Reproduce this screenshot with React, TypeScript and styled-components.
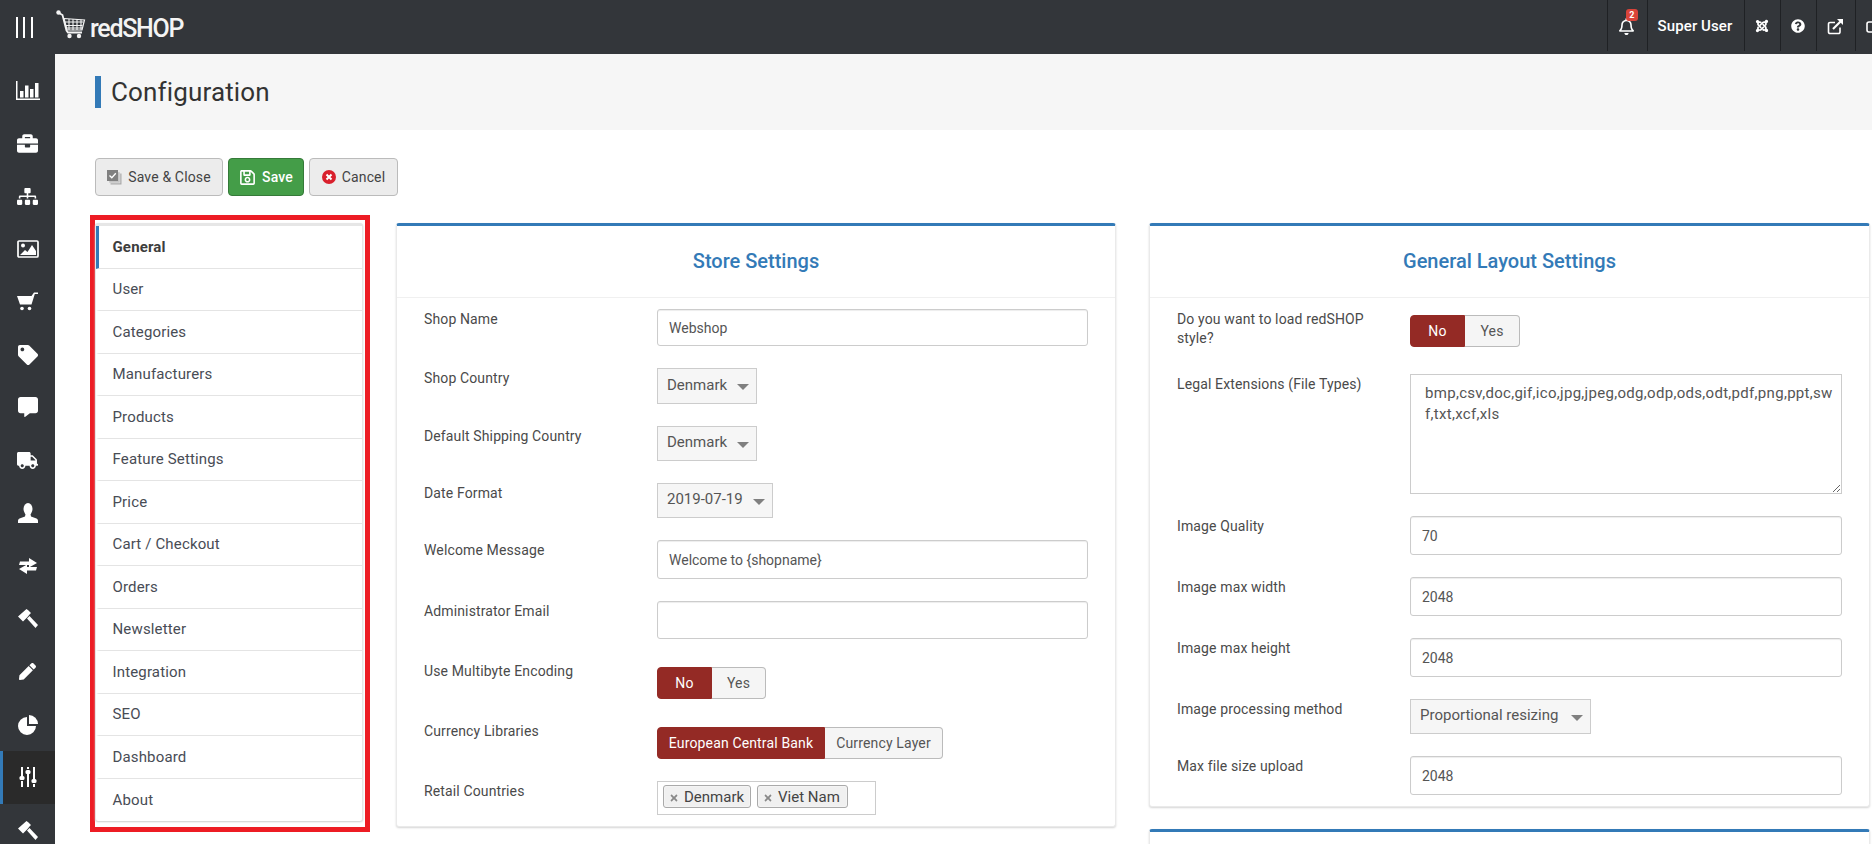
import React from "react";
import styled, { createGlobalStyle } from "styled-components";
import {
  FaBriefcase, FaSitemap, FaTag, FaCommentAlt, FaTruck,
  FaPen, FaRegBell, FaJoomla, FaQuestionCircle, FaRegSave, FaTimes,
} from "react-icons/fa";

const Global = createGlobalStyle`
  html, body { margin: 0; padding: 0; height: 844px; overflow: hidden; background: #fff; }
  * { box-sizing: border-box; }
  body { font-family: Roboto, "Liberation Sans", sans-serif; font-size: 14px; color: #444; }
`;

const Shell = styled.div`width: 1872px; height: 844px; overflow: hidden; display: flex; flex-direction: column;`;
const TopBar = styled.header`height: 54px; flex: none; background: #33363a; display: flex; align-items: flex-start; color: #fff;`;
const Burger = styled.div`width: 48px; height: 54px; display: flex; justify-content: center; gap: 5.5px; padding: 17px 0 16px; margin-right: 8px;
  span { width: 2px; background: #fff; display: block; }`;
const Brand = styled.div`display: flex; align-items: flex-end; height: 30px; margin-top: 9px;`;
const BrandName = styled.span`font-family: Roboto, sans-serif; font-size: 25px; font-weight: 500; line-height: 28px; letter-spacing: -1.3px; color: #f4f4f4; margin-left: 4px; margin-bottom: -4px;`;
const TopRight = styled.div`margin-left: auto; display: flex; height: 51px; width: 265px; flex: none; overflow: hidden;`;
const TopItem = styled.div<{ $w: number }>`width: ${(p) => p.$w}px; flex: none; height: 51px; border-left: 1px solid #1f2124; display: flex; align-items: center; justify-content: center; position: relative; color: #fff; font-size: 15px; font-weight: 500; letter-spacing: .1px; padding: 1px 2px 0 0;`;
const TopEdge = styled(TopItem)`justify-content: flex-start; padding-left: 10px; overflow: hidden; svg { flex: none; }`;
const Badge = styled.span`position: absolute; top: 9px; left: 18px; width: 12px; height: 12px; background: #d9443a; border-radius: 3px; color: #fff; font-size: 9px; font-weight: 700; line-height: 12px; text-align: center;`;
const Body = styled.div`flex: 1; display: flex; min-height: 0;`;
const Side = styled.nav`width: 55px; flex: none; background: #33363a; padding-top: 10px; display: flex; flex-direction: column; overflow: hidden;`;
const SideItem = styled.div<{ $active?: boolean }>`height: 52.85px; flex: none; display: flex; align-items: center; justify-content: center; color: #fff; font-size: 20px;
  background: ${(p) => (p.$active ? "#2a2a2a" : "transparent")};
  border-left: 3px solid ${(p) => (p.$active ? "#337ab7" : "transparent")};
  padding-right: 3px;`;
const Main = styled.main`flex: 1; min-width: 0; display: flex; flex-direction: column;`;
const PageHead = styled.div`height: 76px; flex: none; background: #f6f6f6; padding: 22px 0 0 40px;`;
const Title = styled.h1`margin: 0; height: 32px; border-left: 6px solid #337ab7; padding-left: 10px; font-size: 26px; letter-spacing: .15px; font-weight: 400; line-height: 32px; color: #333;`;
const Content = styled.div`padding: 28px 0 0 40px; flex: 1; min-height: 0;`;
const Toolbar = styled.div`display: flex; gap: 5px; height: 38px; margin-bottom: 19px;`;
const Btn = styled.button<{ $green?: boolean; $w: number }>`width: ${(p) => p.$w}px; height: 38px; padding: 0; display: flex; align-items: center; justify-content: center; gap: 6px;
  font-family: inherit; font-size: 14px; letter-spacing: .15px; font-weight: ${(p) => (p.$green ? 500 : 400)};
  color: ${(p) => (p.$green ? "#fff" : "#444")};
  background: ${(p) => (p.$green ? "#449d48" : "#ececec")};
  border: 1px solid ${(p) => (p.$green ? "#357a39" : "#bbb")}; border-radius: 4px;`;
const Columns = styled.div`display: grid; grid-template-columns: 280px 720px 728px; column-gap: 26px; margin-left: -5px; align-items: start;
  & > :last-child { margin-left: 7px; }`;
const Frame = styled.div`border: 5px solid #ed1c24; height: 617px; padding: 3px 2px 0 0;`;
const Menu = styled.ul`list-style: none; margin: 0; padding: 0; border-top: 3px solid #e6e6e6; border-left: 1px solid #e6e6e6; border-right: 1px solid #e6e6e6; border-radius: 3px; box-shadow: 0 1px 2px #ccc; background: #fff;`;
const MenuItem = styled.li<{ $active?: boolean }>`height: 42.5px; display: flex; align-items: center; padding-left: 13.500px; font-size: 15px; letter-spacing: .15px; line-height: 20px; border-bottom: 1px solid #e4e4e4;
  font-weight: ${(p) => (p.$active ? 700 : 400)};
  color: ${(p) => (p.$active ? "#3d3d3d" : "#484c55")};
  border-left: 3px solid ${(p) => (p.$active ? "#337ab7" : "transparent")};
  &:last-child { border-bottom: 0; }`;
const CardStack = styled.div`display: flex; flex-direction: column; gap: 22px; margin-top: 8px;`;
const Card = styled.section`background: #fff; border: 1px solid #eaeaea; border-top: 3px solid #337ab7; border-radius: 3px; box-shadow: 0 1px 2px #d5d5d5;`;
const CardHead = styled.h2`margin: 0; height: 72px; padding-bottom: 2px; border-bottom: 1px solid #f0f0f0; display: flex; align-items: center; justify-content: center; font-size: 20px; font-weight: 500; color: #337ab7;`;
const CardBody = styled.div`padding: 11px 27px 11px 27px;`;
const Row = styled.div<{ $after?: number }>`display: grid; grid-template-columns: 233px 1fr; margin-bottom: ${(p) => p.$after ?? 22}px;
  &:last-child { margin-bottom: 0; }`;
const Label = styled.label`font-size: 14px; letter-spacing: .13px; line-height: 19px; color: #4a4a4a; padding: 1px 20px 0 0;`;
const Input = styled.input<{ $h?: number }>`width: 100%; height: ${(p) => p.$h ?? 38}px; display: block; border: 1px solid #ccc; border-radius: 3px; padding: 0 11px; font-family: inherit; font-size: 14px; color: #555; background: #fff; box-shadow: inset 0 1px 1px rgba(0,0,0,.075); outline: 0;`;
const Area = styled.textarea`width: 100%; height: 120px; display: block; border: 1px solid #ccc; padding: 8px 5px 8px 14px; font-family: inherit; font-size: 15px; letter-spacing: .3px; line-height: 21px; color: #555; outline: 0; resize: vertical;`;
const SelectBox = styled.div<{ $w: number; $h: number }>`width: ${(p) => p.$w}px; height: ${(p) => p.$h}px; background: #f6f6f6; border: 1px solid #ccc; padding: 0 7px 3px 9px; display: flex; align-items: center; justify-content: space-between; font-size: 15px; color: #555;
  &::after { content: ""; border: 6px solid transparent; border-top: 6px solid #808080; border-bottom: 0; margin-top: 5px; }`;
const Toggle = styled.div`display: inline-flex; height: 32px; margin-top: 6px; vertical-align: top;`;
const ToggleOpt = styled.span<{ $on?: boolean; $w: number }>`width: ${(p) => p.$w}px; display: flex; align-items: center; justify-content: center; font-size: 14px; letter-spacing: .15px;
  color: ${(p) => (p.$on ? "#fff" : "#555")};
  background: ${(p) => (p.$on ? "#942a25" : "#f5f5f5")};
  border: 1px solid ${(p) => (p.$on ? "#942a25" : "#bbb")};
  border-radius: ${(p) => (p.$on ? "4px 0 0 4px" : "0 4px 4px 0")};
  ${(p) => (p.$on ? "" : "border-left: 0;")}`;
const Tags = styled.div`width: 219px; height: 34px; border: 1px solid #ccc; padding: 3px 5px; display: flex; gap: 6px; align-items: flex-start;`;
const TagChip = styled.span<{ $w: number }>`width: ${(p) => p.$w}px; height: 23px; border: 1px solid #aaa; border-radius: 3px; background: #f0f0f0; display: flex; align-items: center; padding-left: 5px; gap: 5px; font-size: 15px; color: #444; box-shadow: 0 0 2px #fff inset;
  svg { color: #888; font-size: 10px; margin-top: 2px; flex: none; }`;
const Spacer = styled.div`height: 300px;`;

const StatsIcon = () => (
  <svg width="24" height="19" viewBox="0 0 24 19" fill="#fff"><path d="M0 0h1.500v17.500H24V19H0z" /><path d="M4 10h3.500v6.500H4zM9 4.500h3.500v12H9zM14 8h3.500v8.500H14zM19 2h3.500v14.500H19z" /></svg>
);
const PictureIcon = () => (
  <svg width="22" height="18" viewBox="0 0 22 18"><rect x="1" y="1" width="20" height="16" rx="1" fill="none" stroke="#fff" strokeWidth="1.700" /><circle cx="6" cy="5.500" r="2" fill="#fff" /><path d="M3 15l5-5 2.500 2L15 5l4 6v4z" fill="#fff" /></svg>
);
const CartIcon = () => (
  <svg width="21" height="19" viewBox="0 0 21 19" fill="#fff"><path d="M0 4h14.500L17 .5h4V2h-3.200l-3.300 10.500H3z" /><circle cx="5" cy="16.500" r="1.800" /><circle cx="12.500" cy="16.500" r="1.800" /></svg>
);
const SlidersIcon = () => (
  <svg width="18" height="20" viewBox="0 0 18 20" fill="#fff"><path d="M2 0h2v9H2zM2 14h2v6H2zM8 0h2v2H8zM8 7h2v13H8zM14 0h2v12h-2zM14 17h2v3h-2z" /><rect x="0.500" y="9" width="5" height="4" rx="1.500" /><rect x="6.500" y="3" width="5" height="4" rx="1.500" /><rect x="12.500" y="12" width="5" height="4" rx="1.500" /></svg>
);
const HammerIcon = () => (
  <svg width="20" height="19" viewBox="0 0 20 19" fill="#fff"><path d="M0 7.500L8.500 0l2 1.500L13 4l-1.500 1.500L9.500 8 5 12.500z" /><path d="M9 9.500l2.500-2.500 8.500 9-2.500 3z" /></svg>
);
const UserIcon = () => (
  <svg width="20" height="20" viewBox="0 0 20 20" fill="#fff"><ellipse cx="10" cy="6" rx="4.500" ry="6" /><path d="M7.500 11h5l.5 2.500 5.500 2c1 .4 1.500 1.300 1.500 2.500v2H0v-2c0-1.200.5-2.100 1.500-2.500l5.500-2z" /></svg>
);
const TransferIcon = () => (
  <svg width="18" height="16" viewBox="0 0 18 16" fill="#fff"><path d="M1 3.500h9V0l8 5-8 4.500V7H0z" /><path d="M17 12.500H8V16L0 11l8-4.500V9h10z" /></svg>
);
const PieIcon = () => (
  <svg width="20" height="20" viewBox="0 0 20 20" fill="#fff"><path d="M9 2a9 9 0 1 0 9 9H9z" /><path d="M11 0a9 9 0 0 1 9 9h-9z" /></svg>
);
const ExternalIcon = () => (
  <svg width="17" height="17" viewBox="0 0 17 17" fill="none" stroke="#fff" strokeWidth="1.600"><path d="M13 9.500V14a1.500 1.500 0 0 1-1.500 1.500H3A1.500 1.500 0 0 1 1.500 14V6A1.500 1.500 0 0 1 3 4.500h5" /><path d="M6 11l8-8" strokeWidth="2.200" /><path d="M10 1h6v6z" fill="#fff" stroke="none" /></svg>
);
const MonitorIcon = () => (
  <svg width="14" height="15" viewBox="0 0 14 15" fill="none" stroke="#fff" strokeWidth="1.600"><rect x="1" y="3" width="14" height="10" rx="2" /></svg>
);
const LogoCart = () => (
  <svg width="30" height="29" viewBox="0 0 30 29" fill="none" stroke="#f4f4f4">
    <circle cx="2.500" cy="2.500" r="2.200" fill="#f4f4f4" stroke="none" />
    <path d="M3 3l3.500 2 4 15.500 1.500 2h14" strokeWidth="1.800" />
    <path d="M8 8.500l20.500 1.500-2.500 10H11z" strokeWidth="1.200" />
    <path d="M8.500 12h19M9.500 15.500h17M10.500 18h16M13 9v11M17 9.300v11M21 9.600v10.500M25 9.800v10" strokeWidth="1.100" />
    <circle cx="13.500" cy="26" r="2.200" fill="#f4f4f4" stroke="none" />
    <circle cx="23" cy="26" r="2.200" fill="#f4f4f4" stroke="none" />
  </svg>
);
const StackIcon = () => (
  <svg width="15" height="15" viewBox="0 0 15 15"><rect x="3.500" y="3.500" width="11" height="11" fill="#aaa" /><rect x="2" y="2" width="11" height="11" fill="#c4c4c4" stroke="#ececec" strokeWidth=".5" /><rect x="0" y="0" width="11" height="11" fill="#808080" /><path d="M2.500 5.500l2.300 2.300 4-4.500" fill="none" stroke="#fff" strokeWidth="1.300" /></svg>
);
const CancelIcon = () => (
  <svg width="14" height="14" viewBox="0 0 14 14"><circle cx="7" cy="7" r="7" fill="#d9202c" /><path d="M4.500 4.500l5 5M9.500 4.500l-5 5" stroke="#fff" strokeWidth="2" /></svg>
);

const sideIcons = [
  <StatsIcon />, <FaBriefcase size={21} />, <FaSitemap size={21} />, <PictureIcon />, <CartIcon />,
  <FaTag size={20} />, <FaCommentAlt size={20} />, <FaTruck size={21} />, <UserIcon />, <TransferIcon />,
  <HammerIcon />, <FaPen size={17} />, <PieIcon />, <SlidersIcon />, <HammerIcon />,
];
const menu = ["General", "User", "Categories", "Manufacturers", "Products", "Feature Settings", "Price", "Cart / Checkout", "Orders", "Newsletter", "Integration", "SEO", "Dashboard", "About"];

const Field = ({ label, children, after }: { label: string; children: React.ReactNode; after?: number }) => (
  <Row $after={after}>
    <Label>{label}</Label>
    <div>{children}</div>
  </Row>
);

export default function App() {
  return (
    <Shell>
      <Global />
      <TopBar>
        <Burger><span /><span /><span /></Burger>
        <Brand><LogoCart /><BrandName>redSHOP</BrandName></Brand>
        <TopRight>
          <TopItem $w={40}><FaRegBell size={17} /><Badge>2</Badge></TopItem>
          <TopItem $w={97}>Super User</TopItem>
          <TopItem $w={36}><FaJoomla size={14} /></TopItem>
          <TopItem $w={36}><FaQuestionCircle size={14} /></TopItem>
          <TopItem $w={39}><ExternalIcon /></TopItem>
          <TopEdge $w={17}><MonitorIcon /></TopEdge>
        </TopRight>
      </TopBar>
      <Body>
        <Side>
          {sideIcons.map((icon, i) => <SideItem key={i} $active={i === 13}>{icon}</SideItem>)}
        </Side>
        <Main>
          <PageHead><Title>Configuration</Title></PageHead>
          <Content>
            <Toolbar>
              <Btn $w={128}><StackIcon />Save &amp; Close</Btn>
              <Btn $w={76} $green><FaRegSave size={17} />Save</Btn>
              <Btn $w={89}><CancelIcon />Cancel</Btn>
            </Toolbar>
            <Columns>
              <Frame>
                <Menu>
                  {menu.map((m, i) => <MenuItem key={m} $active={i === 0}>{m}</MenuItem>)}
                </Menu>
              </Frame>
              <CardStack>
                <Card>
                  <CardHead>Store Settings</CardHead>
                  <CardBody>
                    <Field label="Shop Name"><Input readOnly value="Webshop" $h={37} /></Field>
                    <Field label="Shop Country"><SelectBox $w={100} $h={36}>Denmark</SelectBox></Field>
                    <Field label="Default Shipping Country"><SelectBox $w={100} $h={35}>Denmark</SelectBox></Field>
                    <Field label="Date Format"><SelectBox $w={116} $h={35}>2019-07-19</SelectBox></Field>
                    <Field label="Welcome Message"><Input readOnly value="Welcome to {shopname}" $h={39} /></Field>
                    <Field label="Administrator Email"><Input readOnly value="" /></Field>
                    <Field label="Use Multibyte Encoding"><Toggle><ToggleOpt $on $w={55}>No</ToggleOpt><ToggleOpt $w={54}>Yes</ToggleOpt></Toggle></Field>
                    <Field label="Currency Libraries"><Toggle><ToggleOpt $on $w={168}>European Central Bank</ToggleOpt><ToggleOpt $w={118}>Currency Layer</ToggleOpt></Toggle></Field>
                    <Field label="Retail Countries">
                      <Tags>
                        <TagChip $w={88}><FaTimes />Denmark</TagChip>
                        <TagChip $w={91}><FaTimes />Viet Nam</TagChip>
                      </Tags>
                    </Field>
                  </CardBody>
                </Card>
              </CardStack>
              <CardStack>
                <Card>
                  <CardHead>General Layout Settings</CardHead>
                  <CardBody>
                    <Field label="Do you want to load redSHOP style?" after={26}><Toggle><ToggleOpt $on $w={55}>No</ToggleOpt><ToggleOpt $w={55}>Yes</ToggleOpt></Toggle></Field>
                    <Field label="Legal Extensions (File Types)"><Area readOnly value="bmp,csv,doc,gif,ico,jpg,jpeg,odg,odp,ods,odt,pdf,png,ppt,swf,txt,xcf,xls" /></Field>
                    <Field label="Image Quality"><Input readOnly value="70" $h={39} /></Field>
                    <Field label="Image max width"><Input readOnly value="2048" $h={39} /></Field>
                    <Field label="Image max height"><Input readOnly value="2048" $h={39} /></Field>
                    <Field label="Image processing method"><SelectBox $w={181} $h={35}>Proportional resizing</SelectBox></Field>
                    <Field label="Max file size upload"><Input readOnly value="2048" $h={39} /></Field>
                  </CardBody>
                </Card>
                <Card><Spacer /></Card>
              </CardStack>
            </Columns>
          </Content>
        </Main>
      </Body>
    </Shell>
  );
}
